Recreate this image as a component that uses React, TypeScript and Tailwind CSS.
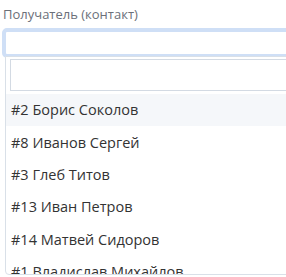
import { useState } from 'react';

const contacts = [
  '#2 Борис Соколов',
  '#8 Иванов Сергей',
  '#3 Глеб Титов',
  '#13 Иван Петров',
  '#14 Матвей Сидоров',
  '#1 Владислав Михайлов',
  '#5 Олег Смирнов',
];

export default function App() {
  const [query, setQuery] = useState('');
  const [active, setActive] = useState(0);

  const items = contacts.filter((c) => c.toLowerCase().includes(query.toLowerCase()));

  return (
    <div className="h-[277px] w-[286px] overflow-hidden bg-white font-['Open_Sans',sans-serif]">
      <div className="pl-[3px] pt-[5px] text-[13px] leading-[18px] text-[#6b7079]">Получатель (контакт)</div>

      <div className="relative ml-[2px] mt-[5px] w-[320px]">
        {/* select with focus glow */}
        <div className="h-[30px] rounded-[5px] border-[4px] border-[#cfdff6] bg-white" />

        {/* dropdown */}
        <div className="absolute left-[3px] top-[28px] w-[330px] rounded-b-[4px] border border-[#d9e0e8] bg-white">
          <div className="px-[4px] pt-[2px] pb-[3px]">
            <input
              value={query}
              onChange={(e) => setQuery(e.target.value)}
              className="block h-[32px] w-full border border-[#d3dae3] bg-white px-2 text-[14px] outline-none"
            />
          </div>
          <ul className="h-[180px] overflow-hidden">
            {items.map((c, i) => (
              <li
                key={c}
                onMouseEnter={() => setActive(i)}
                className={`flex h-[32.4px] items-center pl-[5px] text-[14.5px] text-[#333333] ${
                  i === active ? 'bg-[#f5f7fa]' : ''
                }`}
              >
                {c}
              </li>
            ))}
          </ul>
        </div>
      </div>
    </div>
  );
}
